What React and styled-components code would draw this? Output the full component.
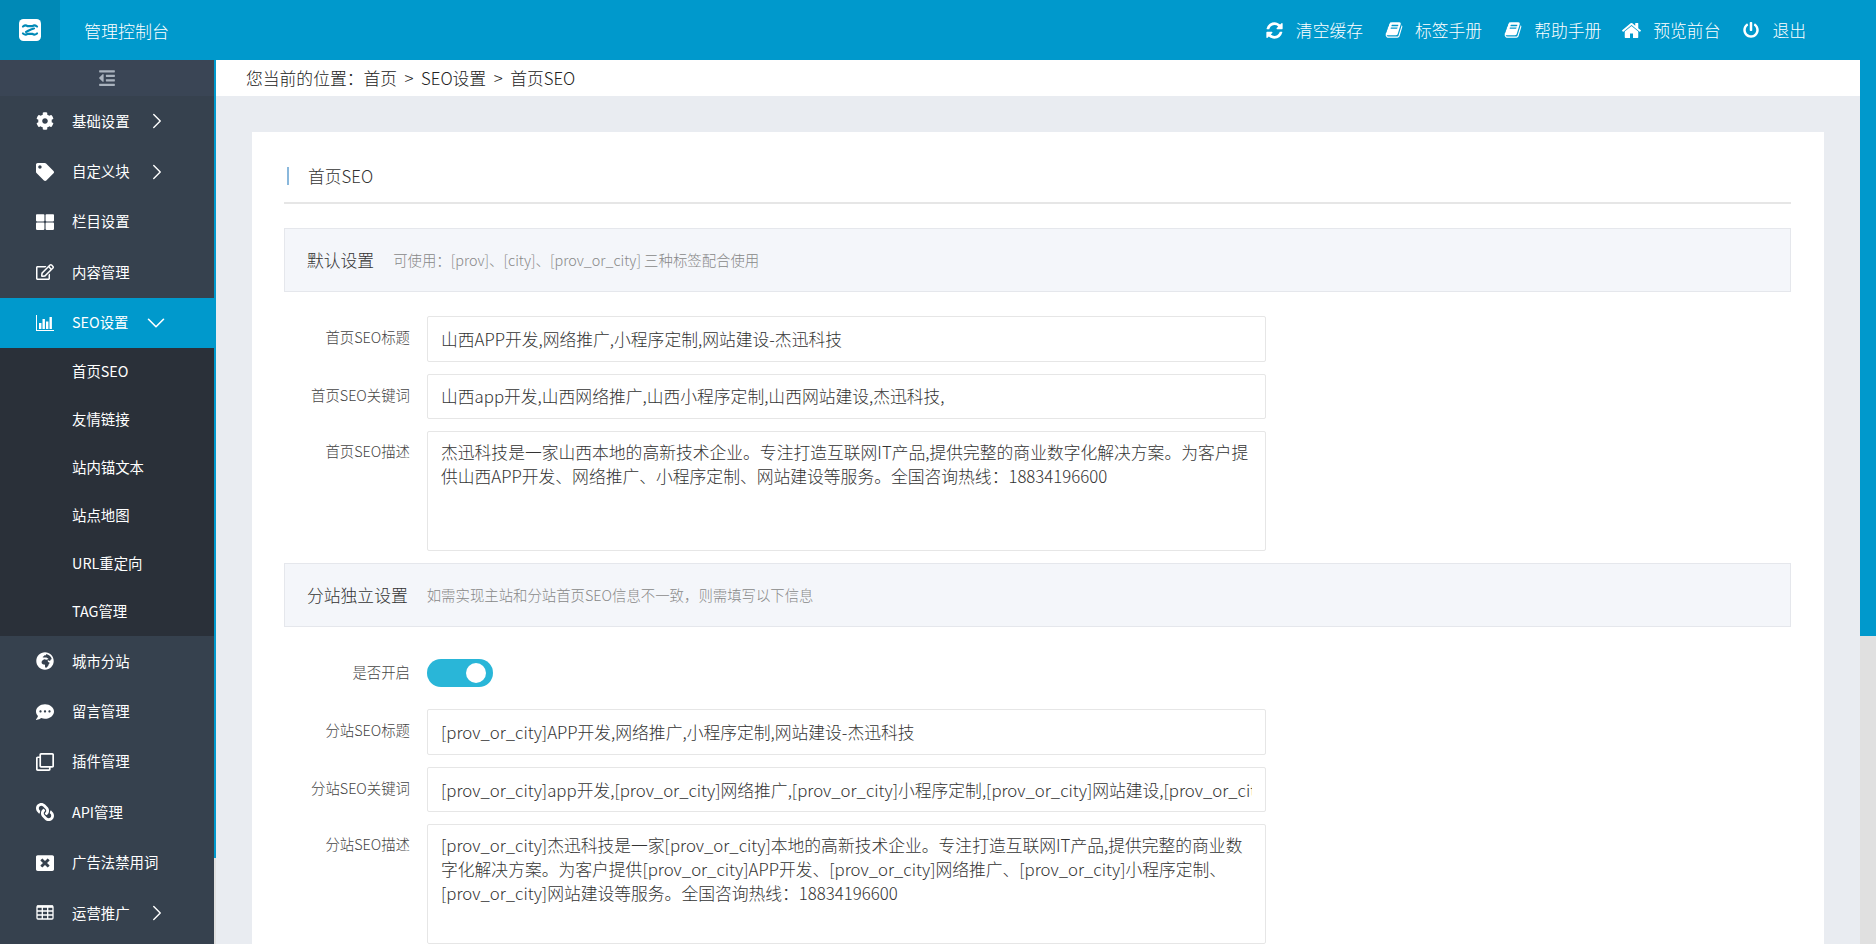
import React from "react";
import styled, { createGlobalStyle } from "styled-components";
import {
  FaCog,
  FaTag,
  FaThLarge,
  FaRegEdit,
  FaGlobeAfrica,
  FaCommentDots,
  FaRegClone,
  FaLink,
  FaWindowClose,
  FaPowerOff,
  FaOutdent,
} from "react-icons/fa";
import { FiChevronRight, FiChevronDown } from "react-icons/fi";

const FONT = `"Noto Sans CJK SC", "Open Sans", sans-serif`;

const GlobalStyle = createGlobalStyle`
  html, body {
    margin: 0;
    padding: 0;
    height: 100%;
    overflow: hidden;
    font-family: ${FONT};
    color: #333;
  }
  * {
    box-sizing: border-box;
  }
`;

const Page = styled.div`
  height: 100vh;
  display: flex;
  overflow: hidden;
  background: #e9ecf1;
`;

const Main = styled.div`
  flex: 1;
  min-width: 0;
  display: flex;
  flex-direction: column;
`;

const Rail = styled.div`
  flex: none;
  width: ${(props) => props.$width}px;
  background: #e0e0e0;
`;

const Thumb = styled.div`
  height: ${(props) => props.$height}px;
  background: #0099cc;
`;

const Header = styled.header`
  flex: none;
  height: 60px;
  display: flex;
  align-items: center;
  background: #0099cc;
  color: #fff;
`;

const LogoBox = styled.div`
  width: 60px;
  height: 60px;
  display: flex;
  align-items: center;
  justify-content: center;
  background: #0089b6;
`;

const Brand = styled.div`
  margin-left: 24px;
  font-size: 17px;
  font-weight: 300;
`;

const Nav = styled.nav`
  margin-left: auto;
  margin-right: 54px;
  display: flex;
  gap: 22px;
`;

const NavItem = styled.a`
  display: flex;
  align-items: center;
  gap: 13px;
  font-size: 16.8px;
  font-weight: 300;
  color: #fff;
`;

const NavIcon = styled.span`
  width: 17px;
  display: flex;
  justify-content: center;

  svg {
    flex: none;
    width: ${(props) => props.$size || 17}px;
    height: ${(props) => props.$size || 17}px;
  }
`;

const Body = styled.div`
  flex: 1;
  min-height: 0;
  display: flex;
`;

const Sidebar = styled.aside`
  flex: none;
  width: 216px;
  display: flex;
  overflow: hidden;
  background: #36414e;
`;

const SideList = styled.div`
  width: 214px;
  flex: none;
`;

const Collapse = styled.div`
  height: 36px;
  display: flex;
  align-items: center;
  justify-content: center;
  background: #3a4555;
  color: #a9b2bd;

  svg {
    width: 18px;
    height: 18px;
  }
`;

const MenuRow = styled.a`
  height: 50.4px;
  display: flex;
  align-items: center;
  color: #fff;
  font-size: 14.4px;
  background: ${(props) => (props.$active ? "#0099cc" : "transparent")};
`;

const MenuIcon = styled.span`
  width: 72px;
  padding-left: 36px;
  flex: none;
  display: flex;
  align-items: center;

  svg {
    width: 18px;
    height: 18px;
  }
`;

const MenuLabel = styled.span`
  width: 78px;
  flex: none;
  padding-bottom: 2px;
  white-space: nowrap;
`;

const Arrow = styled.span`
  display: flex;
  align-items: center;
  margin-left: ${(props) => (props.$open ? "-9px" : "-6px")};

  svg {
    width: ${(props) => (props.$open ? "30px" : "26px")};
    height: ${(props) => (props.$open ? "30px" : "26px")};
    stroke-width: 1.3;
  }
`;

const SubMenu = styled.div`
  background: #2a3039;
`;

const SubRow = styled.a`
  height: 48px;
  padding: 0 0 2px 72px;
  display: flex;
  align-items: center;
  color: #fff;
  font-size: 14.4px;
`;

const Content = styled.main`
  flex: 1;
  min-width: 0;
  overflow: hidden;
`;

const Crumbs = styled.div`
  height: 36px;
  padding-left: 30px;
  display: flex;
  align-items: center;
  background: #fff;
  font-size: 16.8px;
  font-weight: 300;
  color: #222;
`;

const Sep = styled.span`
  margin: 0 7.5px;
`;

const Wrap = styled.div`
  padding: 36px;
`;

const Card = styled.section`
  padding: 0 33px 40px 32px;
  background: #fff;
`;

const CardTitle = styled.div`
  height: 72px;
  display: flex;
  align-items: center;
  padding-top: 18px;
  border-bottom: 2px solid #e6e6e6;
  font-size: 16.8px;
  font-weight: 300;
  color: #333;

  &::before {
    content: "";
    width: 2px;
    height: 18px;
    margin: 0 19px 0 3px;
    background: #8ab8dc;
  }
`;

const Section = styled.div`
  height: 64px;
  margin-top: ${(props) => props.$top || 12}px;
  padding: 0 0 1px 22px;
  display: flex;
  align-items: center;
  gap: 19px;
  background: #f4f6fa;
  border: 1px solid #e5e7ec;
`;

const SectionName = styled.span`
  font-size: 16.8px;
  font-weight: 300;
  color: #333;
`;

const Hint = styled.span`
  font-size: 14.4px;
  font-weight: 300;
  color: #888;
`;

const Fields = styled.div`
  margin-top: ${(props) => props.$top}px;
  display: grid;
  grid-template-columns: 126px 839px;
  column-gap: 17px;
  row-gap: 12px;
`;

const Label = styled.label`
  padding-top: ${(props) => props.$top ?? 10}px;
  text-align: right;
  font-size: 14.4px;
  font-weight: 300;
  color: #444;
  white-space: nowrap;
`;

const TextInput = styled.input`
  width: 100%;
  height: 45.6px;
  padding: 0 13px;
  background: #fff;
  border: 1px solid #e6e6e6;
  border-radius: 2px;
  outline: none;
  font-family: ${FONT};
  font-size: 16.8px;
  font-weight: 300;
  color: #333;
`;

const TextArea = styled.textarea`
  width: 100%;
  height: 120px;
  padding: 8px 8px 6px 13px;
  display: block;
  background: #fff;
  border: 1px solid #e6e6e6;
  border-radius: 2px;
  outline: none;
  resize: none;
  font-family: ${FONT};
  font-size: 16.8px;
  font-weight: 300;
  line-height: 24px;
  color: #333;
`;

const Switch = styled.div`
  width: 66px;
  height: 28px;
  margin-bottom: 10px;
  padding-right: 7px;
  display: flex;
  align-items: center;
  justify-content: flex-end;
  border-radius: 14px;
  background: #29b6d8;

  &::after {
    content: "";
    width: 20px;
    height: 20px;
    border-radius: 50%;
    background: #fff;
  }
`;

const FlipIcon = styled.span`
  display: flex;
  transform: scaleX(-1);
`;

const Logo = () => (
  <svg width="22" height="22" viewBox="0 0 22 22">
    <rect width="22" height="22" rx="4.5" fill="#fff" />
    <g fill="none" stroke="#0089b6" strokeWidth="2.2" strokeLinecap="round">
      <path d="M4 7.5c2-1.6 3-1.6 4.5-.4M13.5 7.1c1.5-1.2 2.5-1.2 4.5.4M8.5 7.1h5" />
      <path d="M15 9.5c-3 .4-6 2.6-8 3.4" />
      <path d="M4 14.5c2 1.6 3 1.6 4.5.4M13.5 14.9c1.5 1.2 2.5 1.2 4.5-.4M8.5 14.9h5" />
    </g>
  </svg>
);

const FaFourIcon = ({ d }) => (
  <svg viewBox="0 0 1792 1792" fill="currentColor">
    <path d={d} />
  </svg>
);

const REFRESH =
  "M1639 1056q0 5-1 7-64 268-268 434.5t-478 166.5q-146 0-282.5-55t-243.5-157l-129 129q-19 19-45 19t-45-19-19-45v-448q0-26 19-45t45-19h448q26 0 45 19t19 45-19 45l-137 137q71 66 161 102t187 36q134 0 250-65t186-179q11-17 53-117 8-23 30-23h192q13 0 22.5 9.5t9.5 22.5zm25-800v448q0 26-19 45t-45 19h-448q-26 0-45-19t-19-45 19-45l138-138q-148-137-349-137-134 0-250 65t-186 179q-11 17-53 117-8 23-30 23h-199q-13 0-22.5-9.5t-9.5-22.5v-7q65-268 270-434.5t480-166.5q146 0 284 55.5t245 156.5l130-129q19-19 45-19t45 19 19 45z";
const BOOK =
  "M1703 478q40 57 18 129l-275 906q-19 64-76.5 107.5t-122.5 43.5h-923q-77 0-148.5-53.5t-99.5-131.5q-24-67-2-127 0-4 3-27t4-37q1-8-3-21.5t-3-19.5q2-11 8-21t16.5-23.5 16.5-23.5q23-38 45-91.5t30-91.5q3-10 .5-30t-.5-28q3-11 17-28t17-23q21-36 42-92t25-90q1-9-2.5-32t.5-28q4-13 22-30.5t22-22.5q19-26 42.5-84.5t27.5-96.5q1-8-3-25.5t-2-26.5q2-8 9-18t18-23 17-21q8-12 16.5-30.5t15-35 16-36 19.5-32 26.5-23.5 36-11.5 47.5 5.5l-1 3q38-9 51-9h761q74 0 114 56t18 130l-274 906q-36 119-71.5 153.5t-128.5 34.5h-869q-27 0-38 15-11 16-1 43 24 70 144 70h923q29 0 56-15.5t35-41.5l300-987q7-22 5-57 38 15 59 43zm-1064 2q-4 13 2 22.5t20 9.5h608q13 0 25.5-9.5t16.5-22.5l21-64q4-13-2-22.5t-20-9.5h-608q-13 0-25.5 9.5t-16.5 22.5zm-83 256q-4 13 2 22.5t20 9.5h608q13 0 25.5-9.5t16.5-22.5l21-64q4-13-2-22.5t-20-9.5h-608q-13 0-25.5 9.5t-16.5 22.5z";
const HOME =
  "M1472 992v480q0 26-19 45t-45 19h-384v-384h-256v384h-384q-26 0-45-19t-19-45v-480q0-1 .5-3t.5-3l575-474 575 474q1 2 1 6zm223-69l-62 74q-8 9-21 11h-3q-13 0-21-7l-692-577-692 577q-12 8-24 7-13-2-21-11l-62-74q-8-10-7-23.5t11-21.5l719-599q32-26 76-26t76 26l244 204v-195q0-14 9-23t23-9h192q14 0 23 9t9 23v408l219 182q10 8 11 21.5t-7 23.5z";

const BarChartIcon = () => (
  <svg viewBox="0 0 18 18" fill="currentColor">
    <path d="M0 1h1v15h17v1H0z" />
    <rect x="3" y="9" width="2.4" height="6" />
    <rect x="6.5" y="5" width="2.4" height="10" />
    <rect x="10" y="7.5" width="2.4" height="7.5" />
    <rect x="13.5" y="3" width="2.4" height="12" />
  </svg>
);

const GridIcon = () => (
  <svg viewBox="0 0 18 18" fill="none" stroke="currentColor" strokeWidth="1.3">
    <rect x="1" y="2" width="16" height="13" rx="1" />
    <path d="M1 2.6h16" strokeWidth="2.4" />
    <path d="M1 7h16M1 11h16M6.3 3v12M11.7 3v12" />
  </svg>
);

const NAV = [
  { icon: <FaFourIcon d={REFRESH} />, size: 19, label: "清空缓存" },
  { icon: <FaFourIcon d={BOOK} />, size: 18, label: "标签手册" },
  { icon: <FaFourIcon d={BOOK} />, size: 18, label: "帮助手册" },
  { icon: <FaFourIcon d={HOME} />, size: 21, label: "预览前台" },
  { icon: <FaPowerOff />, size: 16, label: "退出" },
];

const TOP_MENU = [
  { icon: <FaCog />, label: "基础设置", more: true },
  { icon: <FaTag />, label: "自定义块", more: true },
  { icon: <FaThLarge />, label: "栏目设置" },
  { icon: <FaRegEdit />, label: "内容管理" },
];

const SUB_MENU = ["首页SEO", "友情链接", "站内锚文本", "站点地图", "URL重定向", "TAG管理"];

const BOTTOM_MENU = [
  { icon: <FaGlobeAfrica />, label: "城市分站" },
  { icon: <FaCommentDots />, label: "留言管理" },
  { icon: <FaRegClone />, label: "插件管理" },
  { icon: <FlipIcon><FaLink /></FlipIcon>, label: "API管理" },
  { icon: <FaWindowClose />, label: "广告法禁用词" },
  { icon: <GridIcon />, label: "运营推广", more: true },
];

const renderMenu = (items) =>
  items.map((item) => (
    <MenuRow key={item.label}>
      <MenuIcon>{item.icon}</MenuIcon>
      <MenuLabel>{item.label}</MenuLabel>
      {item.more && (
        <Arrow>
          <FiChevronRight />
        </Arrow>
      )}
    </MenuRow>
  ));

const App = () => {
  return (
    <>
      <GlobalStyle />
      <Page>
        <Main>
          <Header>
            <LogoBox>
              <Logo />
            </LogoBox>
            <Brand>管理控制台</Brand>
            <Nav>
              {NAV.map((item) => (
                <NavItem key={item.label}>
                  <NavIcon $size={item.size}>{item.icon}</NavIcon>
                  {item.label}
                </NavItem>
              ))}
            </Nav>
          </Header>
          <Body>
            <Sidebar>
              <SideList>
                <Collapse>
                  <FaOutdent />
                </Collapse>
                {renderMenu(TOP_MENU)}
                <MenuRow $active>
                  <MenuIcon>
                    <BarChartIcon />
                  </MenuIcon>
                  <MenuLabel>SEO设置</MenuLabel>
                  <Arrow $open>
                    <FiChevronDown />
                  </Arrow>
                </MenuRow>
                <SubMenu>
                  {SUB_MENU.map((label) => (
                    <SubRow key={label}>{label}</SubRow>
                  ))}
                </SubMenu>
                {renderMenu(BOTTOM_MENU)}
              </SideList>
              <Rail $width={2}>
                <Thumb $height={798} />
              </Rail>
            </Sidebar>
            <Content>
              <Crumbs>
                您当前的位置：首页<Sep>&gt;</Sep>SEO设置<Sep>&gt;</Sep>首页SEO
              </Crumbs>
              <Wrap>
                <Card>
                  <CardTitle>首页SEO</CardTitle>
                  <Section $top={24}>
                    <SectionName>默认设置</SectionName>
                    <Hint>可使用：[prov]、[city]、[prov_or_city] 三种标签配合使用</Hint>
                  </Section>
                  <Fields $top={24}>
                    <Label>首页SEO标题</Label>
                    <TextInput readOnly defaultValue="山西APP开发,网络推广,小程序定制,网站建设-杰迅科技" />
                    <Label>首页SEO关键词</Label>
                    <TextInput readOnly defaultValue="山西app开发,山西网络推广,山西小程序定制,山西网站建设,杰迅科技," />
                    <Label $top={9}>首页SEO描述</Label>
                    <TextArea
                      readOnly
                      defaultValue="杰迅科技是一家山西本地的高新技术企业。专注打造互联网IT产品,提供完整的商业数字化解决方案。为客户提供山西APP开发、网络推广、小程序定制、网站建设等服务。全国咨询热线：18834196600"
                    />
                  </Fields>
                  <Section>
                    <SectionName>分站独立设置</SectionName>
                    <Hint>如需实现主站和分站首页SEO信息不一致，则需填写以下信息</Hint>
                  </Section>
                  <Fields $top={32}>
                    <Label $top={2}>是否开启</Label>
                    <Switch />
                    <Label>分站SEO标题</Label>
                    <TextInput readOnly defaultValue="[prov_or_city]APP开发,网络推广,小程序定制,网站建设-杰迅科技" />
                    <Label>分站SEO关键词</Label>
                    <TextInput
                      readOnly
                      defaultValue="[prov_or_city]app开发,[prov_or_city]网络推广,[prov_or_city]小程序定制,[prov_or_city]网站建设,[prov_or_city]杰迅科技"
                    />
                    <Label $top={9}>分站SEO描述</Label>
                    <TextArea
                      readOnly
                      defaultValue="[prov_or_city]杰迅科技是一家[prov_or_city]本地的高新技术企业。专注打造互联网IT产品,提供完整的商业数字化解决方案。为客户提供[prov_or_city]APP开发、[prov_or_city]网络推广、[prov_or_city]小程序定制、[prov_or_city]网站建设等服务。全国咨询热线：18834196600"
                    />
                  </Fields>
                </Card>
              </Wrap>
            </Content>
          </Body>
        </Main>
        <Rail $width={16}>
          <Thumb $height={636} />
        </Rail>
      </Page>
    </>
  );
};

export default App;
